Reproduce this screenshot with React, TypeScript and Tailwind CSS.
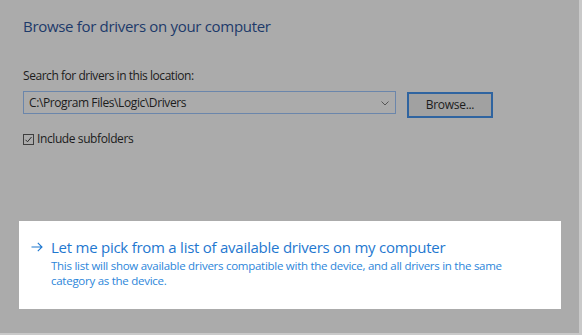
import React from "react";

export default function App() {
  return (
    <div
      className="w-[582px] h-[335px] bg-[#ababab] border-r-[3px] border-b-[2px] border-[#c9c9c9] overflow-hidden"
      style={{ fontFamily: '"Open Sans", "Noto Sans", sans-serif' }}
    >
      <div className="pl-[23px] pt-[16px]">
        <div className="text-[15px] leading-[20px] text-[#1d3a6a] tracking-[-0.31px]">
          Browse for drivers on your computer
        </div>
        <div className="mt-[32px] text-[12px] leading-[16px] text-[#1c1c1c] tracking-[-0.45px]">
          Search for drivers in this location:
        </div>
        <div className="mt-[7px] flex items-start gap-[11px]">
          <div className="w-[373px] h-[23px] border border-[#6b86ab] flex items-center justify-between pl-[5px] pr-[6px]">
            <span className="text-[12px] text-[#1c1c1c] tracking-[-0.4px]">C:\Program Files\Logic\Drivers</span>
            <svg width="8" height="5" viewBox="0 0 8 5" className="mt-[1px]">
              <path d="M0.5 0.5 L4 4 L7.5 0.5" fill="none" stroke="#555" strokeWidth="1" />
            </svg>
          </div>
          <div className="mt-[1px] w-[86px] h-[26px] border-2 border-[#2f64a0] bg-[#a1a1a1] flex items-center justify-center text-[12px] text-[#1c1c1c] tracking-[-0.3px]">
            Browse...
          </div>
        </div>
        <div className="mt-[13px] flex items-center gap-[3px]">
          <div className="w-[11px] h-[11px] border border-[#3e3e3e] flex items-center justify-center">
            <svg width="9" height="9" viewBox="0 0 9 9">
              <path d="M1.5 4.8 L3.5 6.8 L7.5 2" fill="none" stroke="#2a2a2a" strokeWidth="1" />
            </svg>
          </div>
          <span className="text-[12px] leading-[16px] text-[#1c1c1c] tracking-[-0.4px]">Include subfolders</span>
        </div>
      </div>
      <div className="ml-[19px] mt-[74px] w-[542px] h-[88px] bg-white pl-[12px] pt-[16px]">
        <div className="flex items-center">
          <span className="w-[20px] flex items-center">
            <svg width="12" height="10" viewBox="0 0 12 10">
              <path d="M0.5 5 L11 5 M6.8 0.8 L11 5 L6.8 9.2" fill="none" stroke="#1f78d0" strokeWidth="1.1" />
            </svg>
          </span>
          <span className="text-[15px] leading-[20px] text-[#1f78d0] tracking-[-0.25px]">
            Let me pick from a list of available drivers on my computer
          </span>
        </div>
        <div className="pl-[20px] mt-[1px] text-[11.5px] leading-[15px] text-[#2c86da] tracking-[-0.27px]">
          This list will show available drivers compatible with the device, and all drivers in the same
          <br />
          category as the device.
        </div>
      </div>
    </div>
  );
}
